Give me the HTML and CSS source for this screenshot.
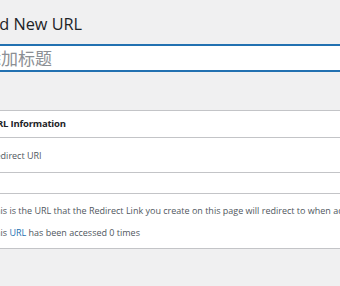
FILE: index.html
```html
<!DOCTYPE html>
<html lang="en">
<head>
<meta charset="UTF-8">
<meta name="viewport" content="width=device-width, initial-scale=1.0">
<title>Add New URL</title>
<link rel="stylesheet" href="styles.css">
</head>
<body>

<div class="wrap">
  <h1 class="page-title">Add New URL</h1>

  <div class="title-wrap">
    <input type="text" class="title-input" placeholder="添加标题">
  </div>

  <div class="postbox">
    <h2 class="postbox-header">URL Information</h2>
    <div class="inside">
      <label class="field-label" for="redirect-uri">Redirect URI</label>
      <input type="text" id="redirect-uri" class="field-input">
      <p class="description">This is the URL that the Redirect Link you create on this page will redirect to when accessed.</p>
      <p class="description">This <a href="#">URL</a> has been accessed 0 times</p>
    </div>
  </div>
</div>

</body>
</html>
```

FILE: styles.css
```css
body {
  margin: 0;
  background-color: #f0f0f1;
  font-family: "Open Sans", "Noto Sans CJK SC", sans-serif;
  color: #3c434a;
  overflow: hidden;
}

.wrap {
  margin-left: -21px;
  width: 700px;
}

.page-title {
  margin: 0;
  padding: 14px 0 0;
  font-size: 16.3px;
  font-weight: 400;
  line-height: 21px;
  color: #1d2327;
}

.title-wrap {
  margin-top: 9px;
}

.title-input {
  display: block;
  box-sizing: border-box;
  width: 100%;
  height: 28px;
  margin: 0;
  padding: 0 3px;
  border: 2px solid #2271b1;
  background: #fff;
  font-family: "Open Sans", "Noto Sans CJK SC", sans-serif;
  font-size: 17px;
  outline: none;
}

.title-input::placeholder {
  color: #8c8f94;
}

.postbox {
  margin-top: 38px;
  border: 1px solid #c3c4c7;
  background: #fff;
}

.postbox-header {
  margin: 0;
  padding: 6px 10px;
  font-size: 9.5px;
  font-weight: 700;
  line-height: 14px;
  letter-spacing: -0.2px;
  color: #1d2327;
  border-bottom: 1px solid #c3c4c7;
}

.inside {
  padding: 11px 10px 8px;
}

.field-label {
  display: block;
  font-size: 9px;
  line-height: 14px;
  color: #50575e;
}

.field-input {
  display: block;
  box-sizing: border-box;
  width: 100%;
  height: 22px;
  margin: 9px 0 0;
  border: 1px solid #c3c4c7;
  background: #fff;
}

.description {
  margin: 10px 0 0;
  font-size: 9px;
  line-height: 14px;
  color: #50575e;
}

.description + .description {
  margin-top: 8px;
}

.description a {
  color: #2271b1;
  text-decoration: none;
}
```
